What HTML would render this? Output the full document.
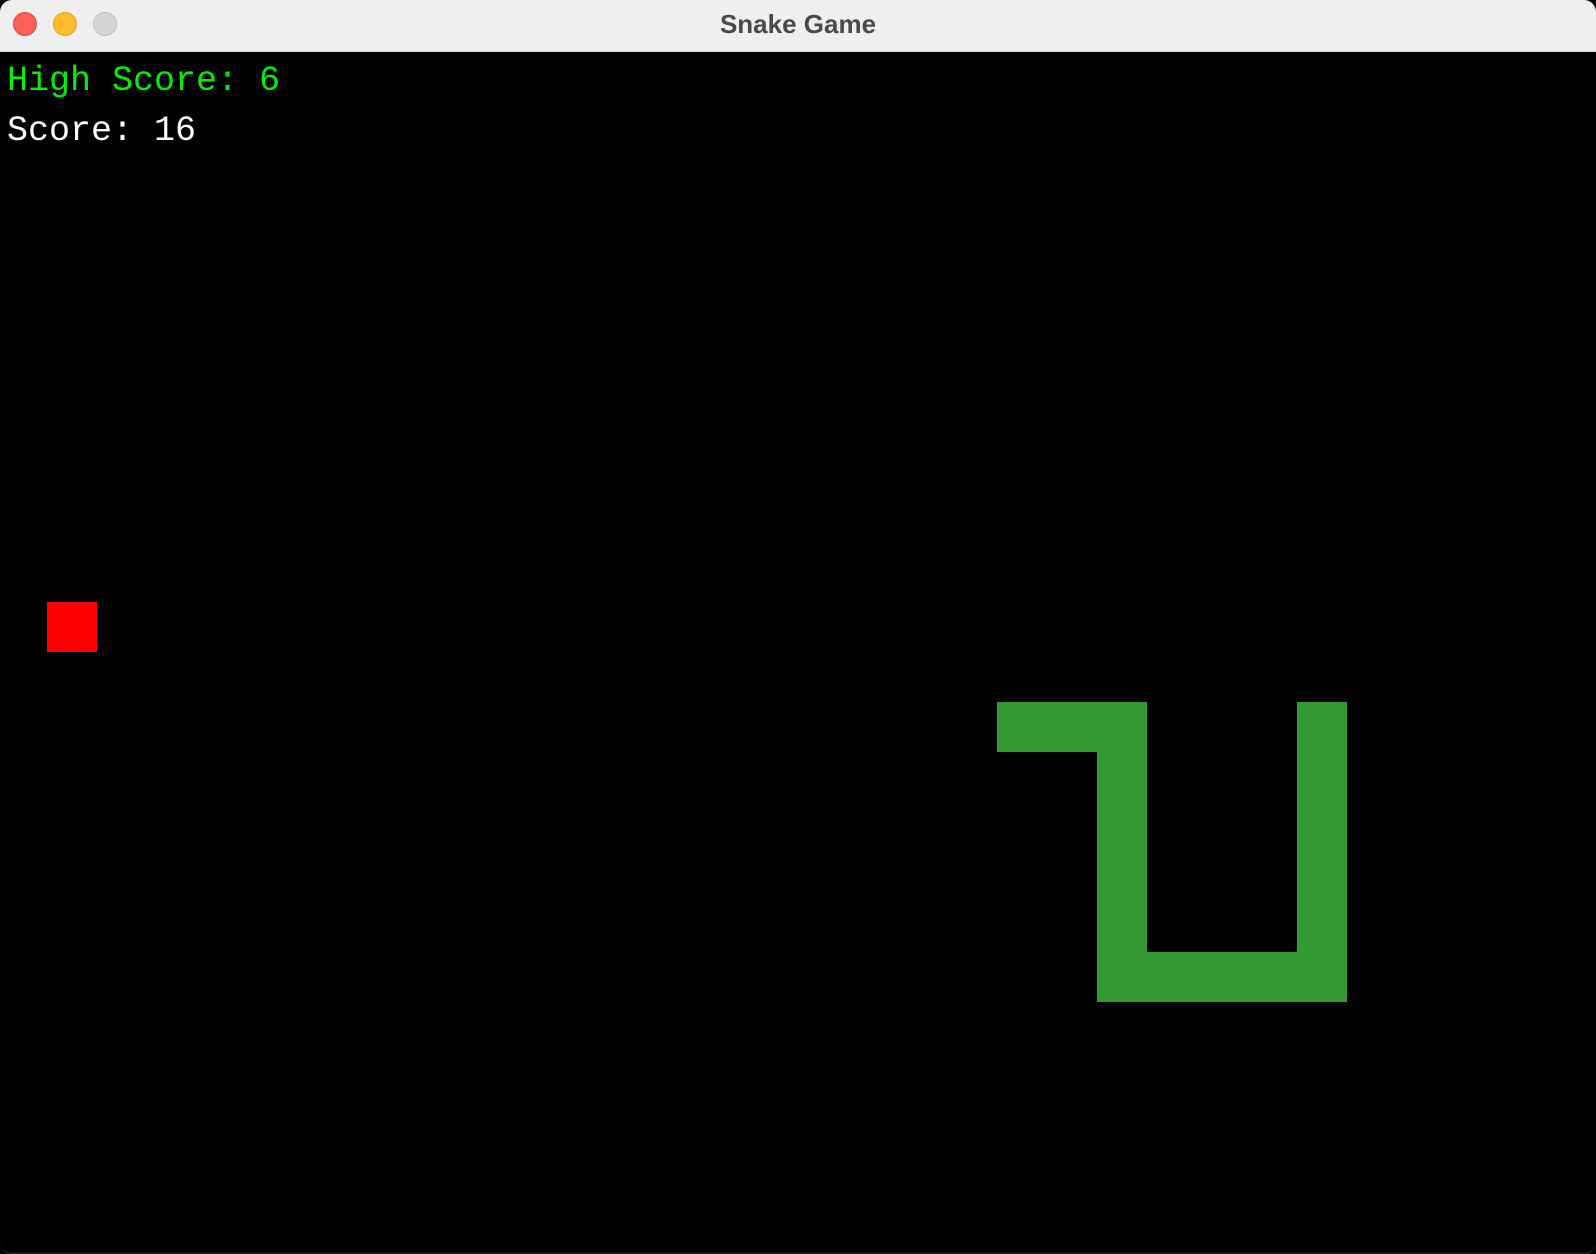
<!DOCTYPE html>
<html><head><meta charset="utf-8"><style>
html,body{margin:0;padding:0;background:#000;}
body{width:1596px;height:1254px;position:relative;overflow:hidden;}
.win{position:absolute;left:0;top:0;width:1596px;height:1253px;background:#000;border-radius:12px;overflow:hidden;border-bottom:1px solid #333;}
.bar{position:absolute;left:0;top:0;width:1596px;height:52px;background:#efefef;border-bottom:1px solid #d0d0d0;box-sizing:border-box;}
.dot{position:absolute;top:12px;width:24px;height:24px;border-radius:50%;box-sizing:border-box;}
.title{position:absolute;left:0;width:1596px;top:11px;text-align:center;font:bold 26px "Liberation Sans",sans-serif;line-height:1;color:#4a4a4a;}
.t{position:absolute;left:7px;font-family:"Liberation Mono",monospace;font-size:35px;line-height:1;}
.g{position:absolute;background:#339933;}
</style></head><body>
<div class="win">
<div class="bar">
<div class="dot" style="left:13px;background:#fe5f57;border:1px solid #e0443e"></div>
<div class="dot" style="left:53px;background:#febc2e;border:1px solid #dea123"></div>
<div class="dot" style="left:93px;background:#d6d6d6;border:1px solid #bdbdbd"></div>
<div class="title">Snake Game</div>
</div>
<div class="t" style="top:64px;color:#00ee00">High Score: 6</div>
<div class="t" style="top:114px;color:#fff">Score: 16</div>
<div style="position:absolute;left:47px;top:602px;width:50px;height:50px;background:#ff0000"></div>
<div class="g" style="left:997px;top:702px;width:150px;height:50px"></div>
<div class="g" style="left:1097px;top:702px;width:50px;height:300px"></div>
<div class="g" style="left:1097px;top:952px;width:250px;height:50px"></div>
<div class="g" style="left:1297px;top:702px;width:50px;height:300px"></div>
</div>
</body></html>
